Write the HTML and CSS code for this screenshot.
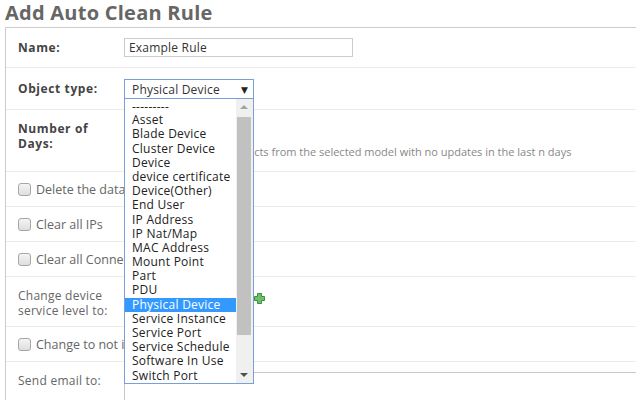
FILE: index.html
```html
<!DOCTYPE html>
<html>
<head>
<meta charset="utf-8">
<link rel="stylesheet" href="styles.css">
</head>
<body>
<h1 class="title">Add Auto Clean Rule</h1>
<div class="panel">
  <div class="row r-name">
    <div class="label bold">Name:</div>
    <div class="field"><div class="input">Example Rule</div></div>
  </div>
  <div class="row r-obj">
    <div class="label bold">Object type:</div>
    <div class="field">
      <div class="select">Physical Device<span class="arrow">&#9660;</span></div>
    </div>
  </div>
  <div class="row r-days">
    <div class="label bold">Number of<br>Days:</div>
    <div class="field days-field">
      <div class="numinput"></div>
      <div class="help">Will clean up all the objects from the selected model with no updates in the last n days</div>
    </div>
  </div>
  <div class="row r-check">
    <label class="check"><span class="cb"></span>Delete the data of these objects</label>
  </div>
  <div class="row r-check">
    <label class="check"><span class="cb"></span>Clear all IPs</label>
  </div>
  <div class="row r-check">
    <label class="check"><span class="cb"></span>Clear all Connections</label>
  </div>
  <div class="row r-level">
    <div class="label">Change device<br>service level to:</div>
    <div class="field level-field">
      <div class="select2"></div>
      <svg class="plus" width="11" height="11" viewBox="0 0 11 11"><path d="M3.5 0.5h4v3h3v4h-3v3h-4v-3h-3v-4h3z" fill="#6cc06c" stroke="#3d8f3d" stroke-width="1"/></svg>
    </div>
  </div>
  <div class="row r-check">
    <label class="check"><span class="cb"></span>Change to not in service</label>
  </div>
  <div class="row r-email">
    <div class="label">Send email to:</div>
    <div class="field"><div class="textarea"></div></div>
  </div>

  <div class="dropdown">
    <ul class="options">
      <li>---------</li>
      <li>Asset</li>
      <li>Blade Device</li>
      <li>Cluster Device</li>
      <li>Device</li>
      <li>device certificate</li>
      <li>Device(Other)</li>
      <li>End User</li>
      <li>IP Address</li>
      <li>IP Nat/Map</li>
      <li>MAC Address</li>
      <li>Mount Point</li>
      <li>Part</li>
      <li>PDU</li>
      <li class="sel">Physical Device</li>
      <li>Service Instance</li>
      <li>Service Port</li>
      <li>Service Schedule</li>
      <li>Software In Use</li>
      <li>Switch Port</li>
    </ul>
    <div class="scrollbar">
      <span class="up"></span>
      <div class="thumb"></div>
      <span class="down"></span>
    </div>
  </div>
</div>
</body>
</html>
```
FILE: styles.css
```css
* { box-sizing: border-box; }
html, body { margin: 0; padding: 0; background: #fff; overflow: hidden; }
body {
  font-family: "Open Sans", "DejaVu Sans", sans-serif;
  font-size: 12px;
  color: #666;
  padding: 0 0 0 5px;
  width: 636px;
  height: 400px;
}
.title {
  margin: 0;
  height: 27px;
  font-size: 20px;
  font-weight: 700;
  line-height: 25px;
  color: #666;
  letter-spacing: 0.25px;
  white-space: nowrap;
}
.panel {
  position: relative;
  border-top: 1px solid #ccc;
  border-left: 1px solid #ccc;
  height: 373px;
  overflow: hidden;
}
.row {
  display: flex;
  align-items: center;
  border-bottom: 1px solid #ebebeb;
  padding-left: 12px;
}
.label {
  width: 106px;
  flex: none;
  line-height: 15px;
  color: #666;
  letter-spacing: 0.25px;
  white-space: nowrap;
}
.bold { font-weight: 700; color: #444; letter-spacing: 0.6px; }
.field { flex: 1; min-width: 0; display: flex; align-items: center; }
.r-name { height: 40px; }
.r-obj { height: 42px; }
.r-days { height: 62px; align-items: flex-start; padding-top: 11px; }
.r-check { height: 35px; }
.r-level { height: 50px; padding-top: 3px; }
.r-email { height: 38px; align-items: flex-start; padding-top: 10px; border-bottom: none; }
.input {
  width: 229px;
  height: 19px;
  border: 1px solid #ccc;
  padding: 0 4px;
  line-height: 17px;
  color: #333;
  letter-spacing: 0.2px;
}
.select {
  position: relative;
  width: 130px;
  height: 21px;
  border: 1px solid #7b9fd8;
  padding-left: 7px;
  line-height: 19px;
  color: #333;
  margin-top: 1px;
  letter-spacing: 0.2px;
}
.arrow {
  position: absolute;
  right: 5px;
  top: 0;
  font-size: 9px;
  color: #222;
}
.days-field { flex-direction: column; align-items: flex-start; }
.numinput { width: 60px; height: 20px; border: 1px solid #ccc; }
.help {
  margin-top: 4px;
  padding-left: 6px;
  font-size: 11px;
  color: #888;
  white-space: nowrap;
  line-height: 14px;
}
.check {
  display: flex;
  align-items: center;
  white-space: nowrap;
  color: #666;
  font-size: 12.5px;
}
.cb {
  width: 13px;
  height: 13px;
  border: 1px solid #a6a6a6;
  border-radius: 3px;
  background: linear-gradient(#f4f4f4, #dedede);
  margin-right: 5px;
  margin-top: 1px;
}
.level-field { gap: 4px; }
.select2 { width: 126px; height: 20px; }
.plus { display: block; margin-top: -9px; }
.textarea {
  flex: 1;
  height: 40px;
  border-top: 1px solid #c8c8c8;
  border-left: 1px solid #c8c8c8;
}
.r-email .label { padding-top: 1px; }

.dropdown {
  position: absolute;
  left: 118px;
  top: 70px;
  width: 130px;
  height: 286px;
  border: 1px solid #7b9fd8;
  background: #fff;
  display: flex;
}
.options {
  list-style: none;
  margin: 0;
  padding: 0;
  flex: 1;
  min-width: 0;
}
.options li {
  height: 14.2px;
  line-height: 14.2px;
  padding-left: 7px;
  color: #222;
  font-size: 12px;
  letter-spacing: 0.25px;
  white-space: nowrap;
}
.options li:first-child { line-height: 16px; }
.options li.sel { background: #3399ff; color: #fff; }
.scrollbar {
  width: 17px;
  flex: none;
  background: #f0f0f0;
  position: relative;
}
.thumb {
  position: absolute;
  left: 1px;
  right: 2px;
  top: 18px;
  height: 218px;
  background: #c1c1c1;
}
.up, .down {
  position: absolute;
  left: 4px;
  width: 0;
  height: 0;
  border-left: 4px solid transparent;
  border-right: 4px solid transparent;
}
.up { top: 6px; border-bottom: 4px solid #a3a3a3; }
.down { bottom: 6px; border-top: 4px solid #505050; }
```
